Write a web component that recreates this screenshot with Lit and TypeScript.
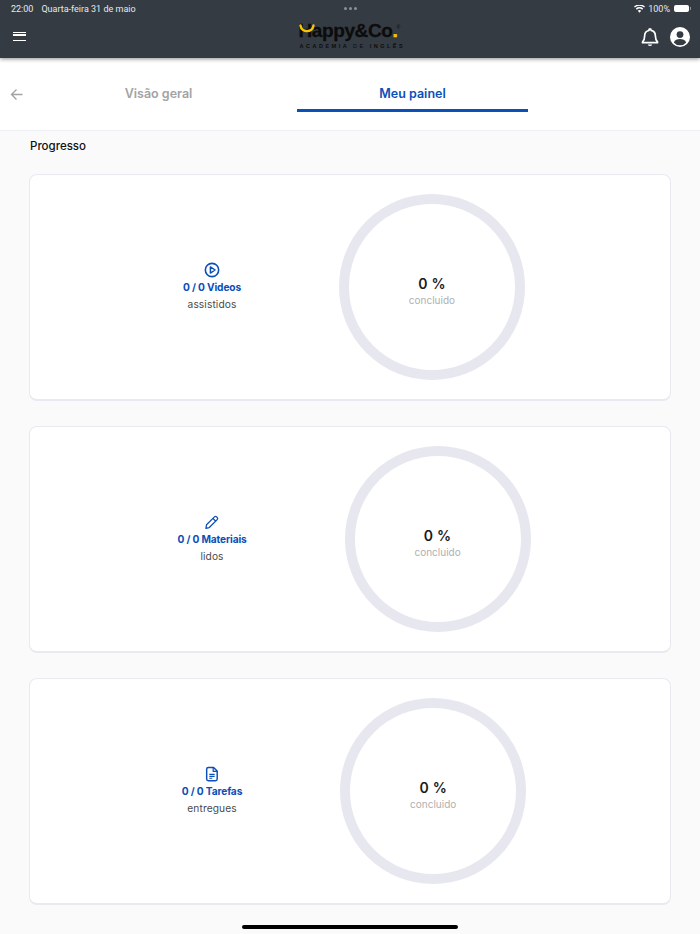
import { LitElement, html, css, svg } from "lit";
import { customElement, property } from "lit/decorators.js";

const icons: Record<string, unknown> = {
  video: svg`<circle cx="12" cy="12" r="10" fill="none" stroke="currentColor" stroke-width="2.400"/><path d="M9.600 7.400v9.200l7-4.600z" fill="none" stroke="currentColor" stroke-width="2.200" stroke-linejoin="round"/>`,
  pencil: svg`<path d="M3.800 16.200 15.700 4.300a2.300 2.300 0 0 1 3.200 0l.9.9a2.300 2.300 0 0 1 0 3.200L7.900 20.300l-5 1.100zM13.400 6.600l4.200 4.200" fill="none" stroke="currentColor" stroke-width="1.900" stroke-linejoin="round"/>`,
  file: svg`<path d="M6.500 2.200h7.900l5.400 5.400v11.900a2.500 2.500 0 0 1-2.500 2.500H6.500A2.500 2.500 0 0 1 4 19.500V4.700a2.500 2.500 0 0 1 2.500-2.500z" fill="none" stroke="currentColor" stroke-width="2.200" stroke-linejoin="round"/><path d="M13.800 2.500v5.700h5.800" fill="none" stroke="currentColor" stroke-width="1.800"/><path d="M8 12.600h8M8 15.600h8M8 18.400h4.400" stroke="currentColor" stroke-width="1.600"/>`,
};

@customElement("progress-card")
export class ProgressCard extends LitElement {
  static styles = css`
    :host {
      display: flex;
      align-items: center;
      justify-content: center;
      gap: 98px;
      height: 227px;
      padding-left: 8px;
      box-sizing: border-box;
      background: #fff;
      border: 1px solid #e9e9f0;
      border-bottom-width: 2px;
      border-radius: 8px;
    }
    .info {
      display: flex;
      flex-direction: column;
      align-items: center;
      color: #4a4a4a;
      font-size: 10.2px;
    }
    .info svg {
      width: 16px;
      height: 16px;
      color: #0b4fb8;
      margin-bottom: 1px;
    }
    .count {
      color: #0b4fb8;
      font-size: 10.2px;
      font-weight: 700;
      line-height: 16px;
      margin-bottom: 1px;
      letter-spacing: -0.15px;
      white-space: nowrap;
    }
    .sub {
      line-height: 16px;
      letter-spacing: 0.1px;
    }
    .ring {
      width: 186px;
      height: 186px;
      box-sizing: border-box;
      border: 10px solid #e7e7f0;
      border-radius: 50%;
      display: flex;
      flex-direction: column;
      align-items: center;
      justify-content: center;
      padding-top: 9px;
    }
    .pct {
      font-size: 14px;
      font-weight: 600;
      color: #1a1a1a;
      line-height: 18px;
      letter-spacing: 0.2px;
    }
    .done {
      font-size: 10px;
      color: #b0b0b0;
      line-height: 15px;
    }
  `;

  @property() icon = "video";
  @property() count = "";
  @property() sub = "";

  render() {
    return html`
      <div class="info">
        <svg viewBox="0 0 24 24">${icons[this.icon]}</svg>
        <div class="count">${this.count}</div>
        <div class="sub">${this.sub}</div>
      </div>
      <div class="ring">
        <div class="pct">0 %</div>
        <div class="done">concluido</div>
      </div>
    `;
  }
}

@customElement("app-root")
export class AppRoot extends LitElement {
  static styles = css`
    :host {
      display: flex;
      flex-direction: column;
      position: relative;
      height: 934px;
      overflow: hidden;
      background: #fafafa;
      font-family: "Inter", "Liberation Sans", sans-serif;
    }
    header {
      height: 58px;
      flex: none;
      background: #343b43;
      box-shadow: 0 1px 4px rgba(0, 0, 0, 0.45);
      color: #fff;
      position: relative;
      z-index: 1;
    }
    .status {
      height: 16px;
      box-sizing: border-box;
      padding: 1px 11px 0 11px;
      display: grid;
      grid-template-columns: 1fr auto 1fr;
      align-items: center;
      font-family: "Roboto", sans-serif;
      font-size: 9px;
      color: #e8e9ea;
    }
    .status .left {
      display: flex;
      gap: 8px;
    }
    .status .dots {
      display: flex;
      gap: 2px;
    }
    .status .dots i {
      width: 3px;
      height: 3px;
      border-radius: 50%;
      background: #8d9196;
    }
    .status .right {
      display: flex;
      justify-content: flex-end;
      align-items: center;
      gap: 3px;
    }
    .battery {
      width: 15px;
      height: 7px;
      background: #fff;
      border-radius: 2px;
      margin-left: 1px;
      position: relative;
    }
    .battery::after {
      content: "";
      position: absolute;
      right: -2px;
      top: 2px;
      width: 1px;
      height: 3px;
      background: #8d9196;
    }
    .bar {
      height: 42px;
      padding: 0 10px 0 13px;
      display: grid;
      grid-template-columns: 1fr auto 1fr;
      align-items: center;
    }
    .burger {
      width: 13px;
      height: 9px;
      box-sizing: border-box;
      margin-top: -2px;
      border-top: 1.5px solid #fff;
      border-bottom: 1.5px solid #fff;
      position: relative;
    }
    .burger::after {
      content: "";
      position: absolute;
      left: 0;
      right: 0;
      top: 1.5px;
      height: 1.5px;
      background: #fff;
    }
    .logo {
      position: relative;
      width: 106px;
      height: 30px;
      margin-top: -3px;
      color: #0c0c0c;
      font-family: "Liberation Sans", sans-serif;
    }
    .logo .name {
      position: absolute;
      left: 0;
      top: 0;
      font-size: 19px;
      font-weight: 700;
      line-height: 20px;
      letter-spacing: -0.4px;
      white-space: nowrap;
      -webkit-text-stroke: 0.3px #0c0c0c;
    }
    .logo .name span {
      color: #f5c400;
      -webkit-text-stroke: 0.6px #f5c400;
    }
    .logo .smile {
      position: absolute;
      left: 0;
      top: 3px;
      width: 16px;
      height: 9px;
    }
    .logo .reg {
      position: absolute;
      left: 98px;
      top: 3px;
      font-size: 5px;
      line-height: 6px;
    }
    .logo .tag {
      position: absolute;
      left: 1px;
      top: 22px;
      font-size: 5.5px;
      font-weight: 700;
      line-height: 7px;
      letter-spacing: 2.5px;
      white-space: nowrap;
    }
    .logo .tag span {
      font-weight: 400;
    }
    .actions {
      display: flex;
      justify-content: flex-end;
      align-items: center;
      gap: 11px;
    }
    .tabs {
      height: 73px;
      flex: none;
      box-sizing: border-box;
      background: #fff;
      border-bottom: 1px solid #eef0f5;
      display: flex;
      position: relative;
    }
    .back {
      width: 31px;
      flex: none;
      padding: 27px 0 0 10px;
    }
    .tab {
      width: 231px;
      height: 54px;
      box-sizing: border-box;
      padding-top: 28px;
      text-align: center;
      font-size: 12.5px;
      font-weight: 600;
      line-height: 16px;
      color: #a3a3a3;
      border-bottom: 3px solid transparent;
    }
    .tab.first {
      margin-left: 2px;
      margin-right: 23px;
    }
    .tab.active {
      color: #0b4fb8;
      border-bottom-color: #0b4fb8;
    }
    main {
      padding: 6px 29px 0 29px;
    }
    h2 {
      margin: 0 0 19px 1px;
      font-size: 11.5px;
      font-weight: 500;
      line-height: 18px;
      color: #111;
    }
    .cards {
      display: flex;
      flex-direction: column;
      gap: 25px;
    }
    .home {
      position: absolute;
      left: 242px;
      bottom: 5px;
      width: 216px;
      height: 4px;
      border-radius: 2px;
      background: #000;
    }
  `;

  render() {
    return html`
      <header>
        <div class="status">
          <div class="left"><span>22:00</span><span>Quarta-feira 31 de maio</span></div>
          <div class="dots"><i></i><i></i><i></i></div>
          <div class="right">
            <svg width="11" height="8" viewBox="0 0 22 16">
              <path d="M11 15.500 7.600 11.600a5 5 0 0 1 6.800 0zM5.600 9.400 3.600 7.100a11 11 0 0 1 14.800 0l-2 2.300a8 8 0 0 0-10.800 0zM1.700 5 0 3a16.400 16.400 0 0 1 22 0l-1.700 2a14 14 0 0 0-18.600 0z" fill="#fff"/>
            </svg>
            <span>100%</span>
            <div class="battery"></div>
          </div>
        </div>
        <div class="bar">
          <div class="burger"></div>
          <div class="logo">
            <div class="name">Happy&Co<span>.</span></div>
            <svg class="smile" viewBox="0 0 16 9">
              <path d="M1.500 1.500C2.500 9 13.500 9 14.500 1.500" fill="none" stroke="#f5c400" stroke-width="2.400" stroke-linecap="round"/>
            </svg>
            <div class="reg">®</div>
            <div class="tag">ACADEMIA <span>DE</span> INGLÊS</div>
          </div>
          <div class="actions">
            <svg width="18" height="20" viewBox="0 0 18 20">
              <path d="M9 1.800a1 1 0 0 1 1 1v.5c2.800.5 4.400 2.800 4.400 5.700 0 3 .6 4.400 2.100 5.800v.9H1.500V15c1.500-1.400 2.100-2.800 2.100-5.800 0-2.900 1.600-5.200 4.400-5.700v-.7a1 1 0 0 1 1-1z" fill="none" stroke="#fff" stroke-width="1.700" stroke-linejoin="round"/>
              <path d="M6.800 17.400a2.300 2.300 0 0 0 4.400 0z" fill="#fff"/>
            </svg>
            <svg width="20" height="20" viewBox="0 0 20 20">
              <circle cx="10" cy="10" r="10" fill="#fff"/>
              <circle cx="10" cy="7.600" r="3.400" fill="#343b43"/>
              <path d="M3.800 15.400c1-2.400 3.500-3.300 6.200-3.300s5.200.9 6.200 3.300a8 8 0 0 1-12.400 0z" fill="#343b43"/>
            </svg>
          </div>
        </div>
      </header>
      <nav class="tabs">
        <div class="back">
          <svg width="13" height="13" viewBox="0 0 13 13">
            <path d="M12.500 6.500H1.500M6.500 1.500l-5 5 5 5" fill="none" stroke="#a3a3a3" stroke-width="1.400"/>
          </svg>
        </div>
        <div class="tab first">Visão geral</div>
        <div class="tab active">Meu painel</div>
      </nav>
      <main>
        <h2>Progresso</h2>
        <div class="cards">
          <progress-card icon="video" count="0 / 0 Videos" sub="assistidos"></progress-card>
          <progress-card icon="pencil" count="0 / 0 Materiais" sub="lidos"></progress-card>
          <progress-card icon="file" count="0 / 0 Tarefas" sub="entregues"></progress-card>
        </div>
      </main>
      <div class="home"></div>
    `;
  }
}
